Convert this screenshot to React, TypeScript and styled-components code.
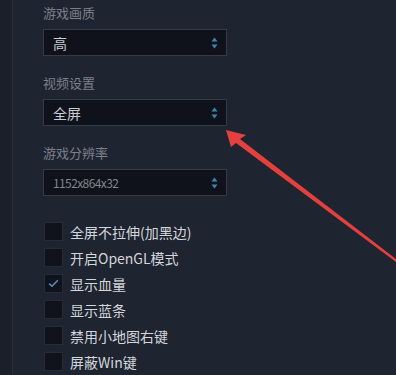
import React from 'react';
import styled, { createGlobalStyle } from 'styled-components';

const GlobalStyle = createGlobalStyle`
  html, body {
    margin: 0;
    padding: 0;
    background: #1e2330;
  }
  body {
    font-family: "Noto Sans CJK SC", "Noto Sans", sans-serif;
  }
`;

const Page = styled.div`
  position: relative;
  width: 396px;
  height: 375px;
  overflow: hidden;
  display: flex;
  background: #1f2431;
`;

const Rail = styled.div`
  width: 12px;
  flex-shrink: 0;
  background: #1b1f2a;
  border-right: 1px solid #2b303b;
`;

const Main = styled.div`
  flex: 1;
  padding: 4px 0 0 30px;
  display: flex;
  flex-direction: column;
`;

const Label = styled.div`
  font-size: 13px;
  line-height: 18px;
  color: #7b808a;
  margin-bottom: 7px;
`;

const Select = styled.div<{ $dim?: boolean }>`
  box-sizing: border-box;
  width: 184px;
  height: 27px;
  margin-bottom: 18px;
  padding: 0 8px 0 9px;
  display: flex;
  align-items: center;
  justify-content: space-between;
  background: #0f121a;
  border: 1px solid #353a46;
  font-size: ${(p) => (p.$dim ? '12px' : '14px')};
  letter-spacing: ${(p) => (p.$dim ? '-0.6px' : '0')};
  color: ${(p) => (p.$dim ? '#80858e' : '#c9ccd2')};
`;

const Spinner = styled.svg`
  width: 7px;
  height: 12px;
`;

const Options = styled.div`
  margin-top: 8px;
  display: flex;
  flex-direction: column;
  gap: 7px;
`;

const Row = styled.div`
  display: flex;
  align-items: center;
  gap: 7px;
  height: 19px;
  padding-left: 1px;
`;

const Box = styled.div`
  box-sizing: border-box;
  width: 19px;
  height: 19px;
  background: #10131b;
  border: 1px solid #262b36;
  display: flex;
  align-items: center;
  justify-content: center;
`;

const RowText = styled.span`
  font-size: 14px;
  color: #d3d6db;
  white-space: nowrap;
`;

const Arrow = styled.svg`
  position: absolute;
  left: 0;
  top: 0;
  pointer-events: none;
`;

function Updown() {
  return (
    <Spinner viewBox="0 0 7 12">
      <path d="M3.5 0.5 L6.5 4.5 L0.5 4.5 Z" fill="#3f86ad" />
      <path d="M3.5 11.5 L6.5 7.5 L0.5 7.5 Z" fill="#3f86ad" />
    </Spinner>
  );
}

const options = [
  { text: '全屏不拉伸(加黑边)', checked: false },
  { text: '开启OpenGL模式', checked: false },
  { text: '显示血量', checked: true },
  { text: '显示蓝条', checked: false },
  { text: '禁用小地图右键', checked: false },
  { text: '屏蔽Win键', checked: false },
];

export default function App() {
  return (
    <>
      <GlobalStyle />
      <Page>
        <Rail />
        <Main>
          <Label>游戏画质</Label>
          <Select>
            高
            <Updown />
          </Select>
          <Label>视频设置</Label>
          <Select>
            全屏
            <Updown />
          </Select>
          <Label>游戏分辨率</Label>
          <Select $dim>
            1152x864x32
            <Updown />
          </Select>
          <Options>
            {options.map((o) => (
              <Row key={o.text}>
                <Box>
                  {o.checked && (
                    <svg width="11" height="9" viewBox="0 0 11 9">
                      <path d="M1.2 4.6 L4 7.3 L9.8 1.2" stroke="#5a8fc2" strokeWidth="1.5" fill="none" />
                    </svg>
                  )}
                </Box>
                <RowText>{o.text}</RowText>
              </Row>
            ))}
          </Options>
        </Main>
        <Arrow width="396" height="375" viewBox="0 0 396 375">
          <path d="M226 130 L246 135 L240 139 L396 259 L396 262 L236 143 L231 147 Z" fill="#e5403d" />
        </Arrow>
      </Page>
    </>
  );
}
